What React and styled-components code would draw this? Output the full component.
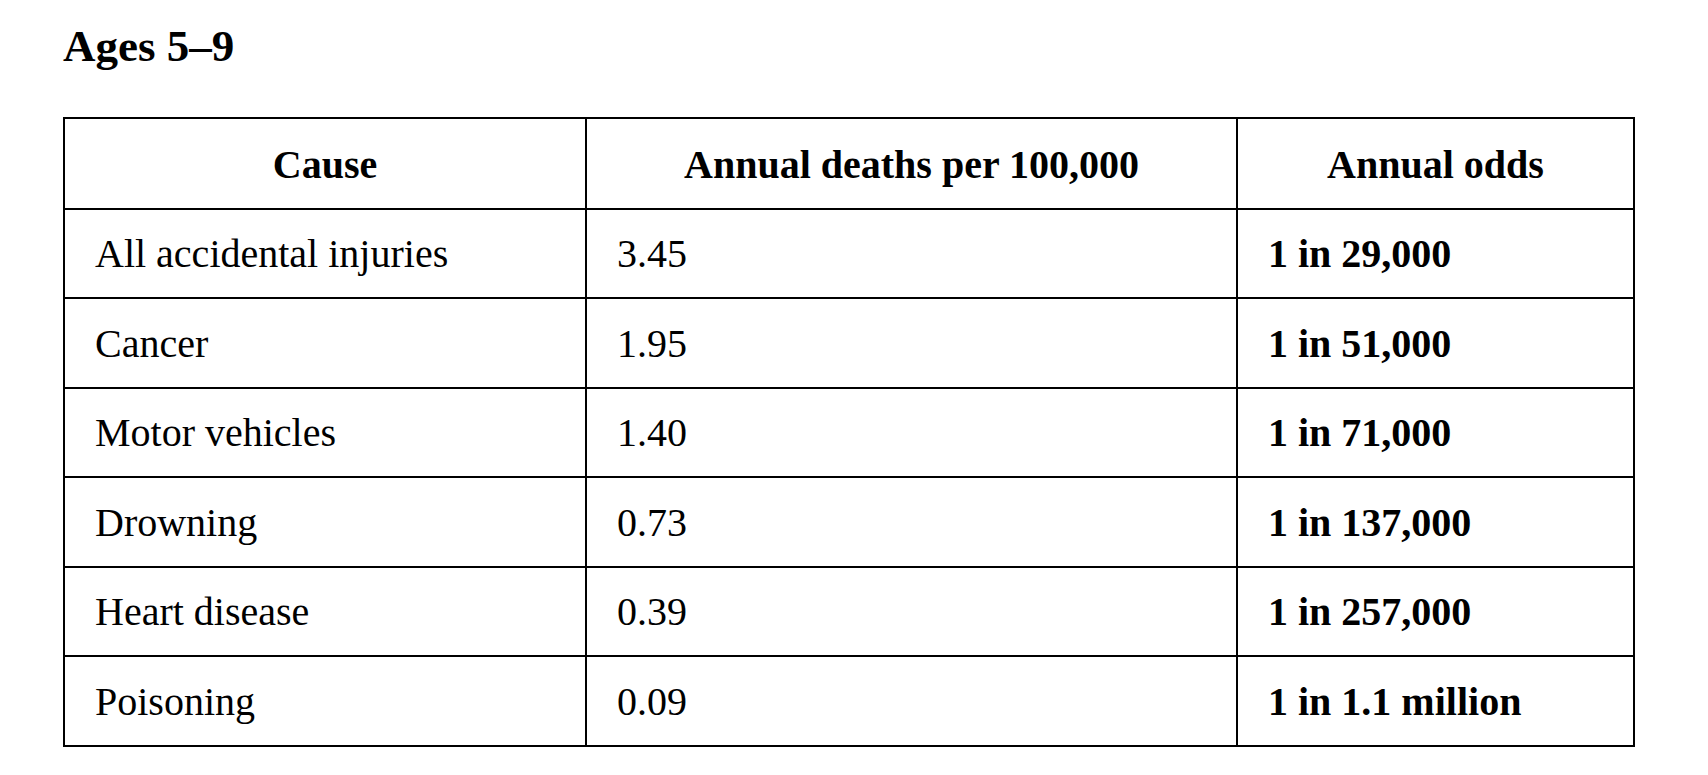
import React from 'react';
import styled, { createGlobalStyle } from 'styled-components';

// Global page reset
const GlobalStyle = createGlobalStyle`
    html, body {
        margin: 0;
        padding: 0;
        background: #ffffff;
    }
    body {
        font-family: "Liberation Serif", "Times New Roman", serif;
        color: #000000;
    }
`;

const Page = styled.div`
    padding: 21px 0 0 63px;
`;

const Heading = styled.h2`
    margin: 0 0 45px 0;
    font-size: 45px;
    font-weight: bold;
    line-height: 51px;
`;

const Table = styled.table`
    width: 1570px;
    border-collapse: collapse;
    table-layout: fixed;
    font-size: 40px;
`;

const Cell = styled.td`
    border: 2px solid #000000;
    height: 85.5px;
    padding: 2px 30px 0 30px;
    text-align: ${props => props.center ? 'center' : 'left'};
    font-weight: ${props => props.bold ? 'bold' : 'normal'};
    vertical-align: middle;
    line-height: 46px;
`;

const HeadCell = styled(Cell).attrs({ as: 'th' })`
    padding-top: 3px;
`;

const rows = [
    { cause: 'All accidental injuries', rate: '3.45', odds: '1 in 29,000' },
    { cause: 'Cancer', rate: '1.95', odds: '1 in 51,000' },
    { cause: 'Motor vehicles', rate: '1.40', odds: '1 in 71,000' },
    { cause: 'Drowning', rate: '0.73', odds: '1 in 137,000' },
    { cause: 'Heart disease', rate: '0.39', odds: '1 in 257,000' },
    { cause: 'Poisoning', rate: '0.09', odds: '1 in 1.1 million' },
];

export default function App() {
    return (
        <Page>
            <GlobalStyle />
            <Heading>Ages 5–9</Heading>
            <Table>
                <colgroup>
                    <col style={{ width: 522 }} />
                    <col style={{ width: 651 }} />
                    <col style={{ width: 397 }} />
                </colgroup>
                <thead>
                    <tr>
                        <HeadCell center bold>Cause</HeadCell>
                        <HeadCell center bold>Annual deaths per 100,000</HeadCell>
                        <HeadCell center bold>Annual odds</HeadCell>
                    </tr>
                </thead>
                <tbody>
                    {rows.map(({ cause, rate, odds }) => (
                        <tr key={cause}>
                            <Cell>{cause}</Cell>
                            <Cell>{rate}</Cell>
                            <Cell bold>{odds}</Cell>
                        </tr>
                    ))}
                </tbody>
            </Table>
        </Page>
    );
}
